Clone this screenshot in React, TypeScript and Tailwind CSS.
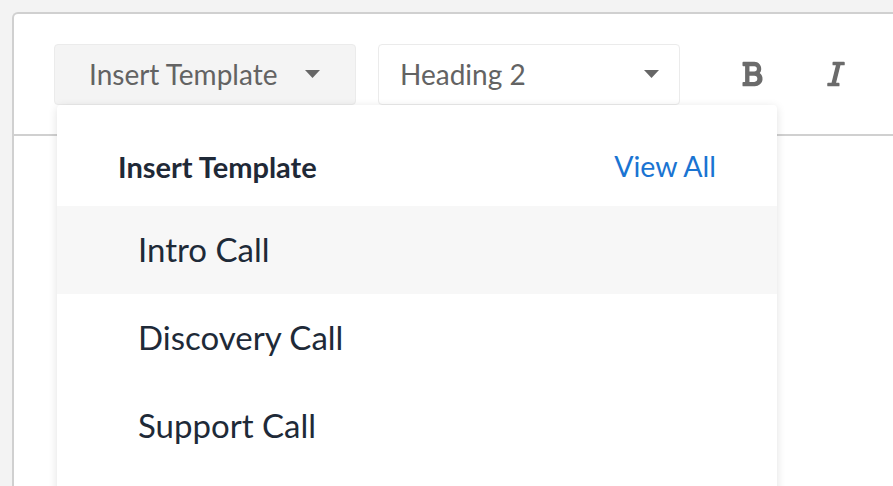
import React from 'react'
import { FaBold, FaItalic } from 'react-icons/fa'

const templates = ['Intro Call', 'Discovery Call', 'Support Call']

function Caret() {
  return (
    <svg width="15" height="8" viewBox="0 0 15 8" className="shrink-0">
      <path d="M0 0 L15 0 L7.5 8 Z" fill="#666666" />
    </svg>
  )
}

export default function App() {
  return (
    <div
      className="h-[486px] w-[893px] overflow-hidden bg-[#f3f3f3] pl-[12px] pt-[12px]"
      style={{ fontFamily: 'Lato, "Noto Sans", sans-serif' }}
    >
      <div className="relative w-[1000px] h-[600px] rounded-tl-[6px] border-l-2 border-t-2 border-[#d0d0d0] bg-white">
        {/* Toolbar */}
        <div className="flex items-center h-[122px] pl-[40px] border-b-2 border-[#d0d0d0]">
          <button className="flex items-center justify-between w-[302px] h-[61px] rounded-[4px] border border-[#ebebeb] bg-[#f4f4f4] pl-[34px] pr-[35px] text-[28px] text-[#636363]">
            <span>Insert Template</span>
            <Caret />
          </button>
          <button className="ml-[22px] flex items-center justify-between w-[302px] h-[61px] rounded-[4px] border border-[#ebebeb] bg-white pl-[21px] pr-[20px] text-[28px] text-[#636363]">
            <span>Heading 2</span>
            <Caret />
          </button>
          <div className="ml-[61px] flex items-center gap-[64px] text-[#6b6b6b]">
            <FaBold className="w-[22px] h-[28px]" />
            <FaItalic className="w-[18px] h-[28px]" />
          </div>
        </div>

        {/* Dropdown menu */}
        <div className="absolute left-[43px] top-[91px] w-[720px] pb-[40px] rounded-[4px] bg-white shadow-[0_2px_10px_rgba(0,0,0,0.12)]">
          <div className="flex items-center justify-between h-[101px] px-[61px] pt-[22px]">
            <span className="text-[29px] font-bold text-[#1f2937]">Insert Template</span>
            <span className="text-[28.5px] text-[#1a74d2]">View All</span>
          </div>
          {templates.map((t, i) => (
            <div
              key={t}
              className={`flex items-center h-[88px] pl-[81px] text-[33px] text-[#1e2a38] ${i === 0 ? 'bg-[#f7f7f7]' : ''}`}
            >
              {t}
            </div>
          ))}
        </div>
      </div>
    </div>
  )
}
